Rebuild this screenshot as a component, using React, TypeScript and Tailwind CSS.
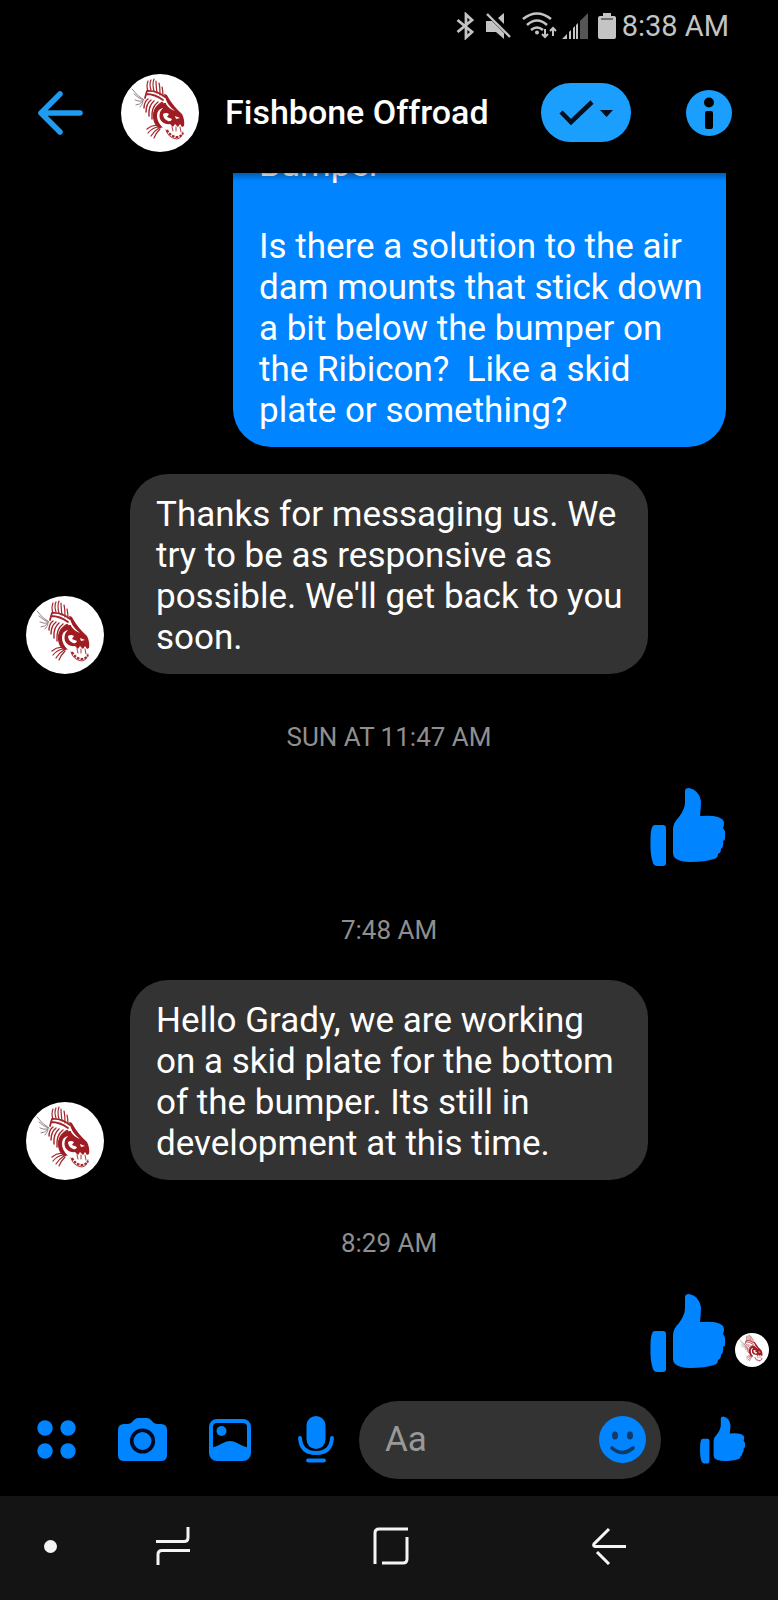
import React from 'react'

type IconProps = { className?: string }

const Avatar = ( { className }: IconProps ) => (
  <svg viewBox="0 0 78 78" className={ className } role="img" aria-label="Fishbone Offroad">
    <circle cx="39" cy="39" r="39" fill="#fff" />
    <g fill="none" stroke="#a3242b" strokeLinecap="round">
      <path strokeWidth="0.9" stroke="#8b7478" d="M11 15q5 7 12 11M13 20q4 4 9 6M14 26q4 2 8 1M15 31q4 0 7-4M19 33q2-2 3-5" />
      <path strokeWidth="1.2" d="M27 17q-2-5 0-10M30 16q-2-6 0-10M33 17q-2-7 0-12M36 19q-1-8-1-12M39 21q0-8-1-12M42 22q0-5-1-9" />
      <path strokeWidth="1.8" d="M24 24q1-4 2-7 9-1 18 6M25 20q9 0 17 6" />
      <path strokeWidth="1.4" d="M27 25q-4 3-4 9M30 26q-5 4-5 12M33 27q-6 5-5 15M37 28q-7 5-6 17" />
      <path strokeWidth="2.6" d="M41 29q-10 6-7 18 1 4 5 6" />
      <path strokeWidth="1.200" d="M38 52q-6-2-12 3M37 53q-6 1-10 6M38 54q-5 3-8 8M39 55q-4 4-6 9" />
      <path strokeWidth="2.2" strokeLinecap="butt" strokeDasharray="2.6 1.2" d="M46 56q3 6 9 7 5 0 7-4" />
      <path strokeWidth="0.9" d="M45 56q2 8 11 9 5-1 6-7M51 53l1 4M55 53l0 4M59 53l1 5" />
    </g>
    <path fill="#9f1c23" d="M43 20q3 0 4 3 5 9 14 17 3 6 2 12l-2 1-2-3-2 3-3-3-2 3-3-3q-7 1-10-5-2-6 3-11-6 1-6 8 0 6 6 12-8-2-10-11 0-11 11-14l3 0z" />
    <path fill="#fff" d="M42 40q3-2 6 0l-2 3 5 2q-1 3-4 2-5-2-5-7zM54 42l5 2-4 1zM44 24q3 8 10 13-6-2-9-7z" />
  </svg>
)

const ThumbIcon = ( { className }: IconProps ) => (
  <svg viewBox="0 0 76 80" className={ className } fill="#0084ff" aria-hidden="true">
    <path d="M6 38h8q3 0 3 3v35q0 3-3 3H8q-3 0-4-3Q1 68 1.500 54q0-9 1-12 1-4 3.500-4z" />
    <path d="M36 4q0-3 4-3 10 2 12 13 0 6-1 15 12-1 18 1 6 2 6 6 0 3-1 5 3 4 3 8 0 3-3 5 1 5-2 8 0 4-3 5 0 4-4 5-9 3-24 3-10 0-15-4-2-2-2-5V42q0-6 6-12 6-8 6-15z" />
  </svg>
)

const BackIcon = () => (
  <svg viewBox="0 0 46 44" className="h-11 w-[46px]" fill="none" stroke="#1f9cf0" strokeWidth="5.500" strokeLinecap="round" strokeLinejoin="round" aria-hidden="true">
    <path d="M23 3L4 22l19 19M4 22h39" />
  </svg>
)

const StatusBar = () => (
  <div className="flex h-[52px] items-center justify-end pr-[49px] text-[#c4c4c4]">
    <svg viewBox="0 0 18 28" className="h-7 w-[18px]" fill="none" stroke="currentColor" strokeWidth="2.8" aria-hidden="true">
      <path d="M1.500 8L16 20l-6 5.500v-23L16 8 1.500 20" />
    </svg>
    <svg viewBox="0 0 26 28" className="ml-3 h-7 w-[26px]" fill="currentColor" aria-hidden="true">
      <path d="M0 9h6l12 12v6l-8-7H0zM18 1v11l-6-6z" />
      <path d="M1 2l23 23" stroke="currentColor" strokeWidth="2.4" />
    </svg>
    <svg viewBox="0 0 36 28" className="ml-2.5 h-7 w-9" fill="none" stroke="currentColor" strokeWidth="2.6" aria-hidden="true">
      <path d="M1 7Q15-4 29 7M5 13Q15 4 25 13M9 18Q15 13 21 18" />
      <circle cx="15" cy="20.500" r="2" fill="currentColor" stroke="none" />
      <path strokeWidth="2" d="M23 17v8M20 22l3 3 3-3M31 24v-8M28 19l3-3 3 3" />
    </svg>
    <svg viewBox="0 0 26 26" className="ml-1 h-[26px] w-[26px]" fill="currentColor" aria-hidden="true">
      <path d="M0 26l5-5v5zM7 19l2-2v9H7zM11 15l2-2v13h-2zM14 12l2-2v16h-2z" />
      <path fill="#555" d="M18 8l8-8v26h-8z" />
    </svg>
    <svg viewBox="0 0 18 26" className="ml-2.5 h-[26px] w-[18px]" fill="currentColor" aria-hidden="true">
      <path d="M5 0h8v3h3q2 0 2 2v19q0 2-2 2H2q-2 0-2-2V5q0-2 2-2h3z" />
      <path d="M3 6h12" stroke="#555" strokeWidth="1.5" />
    </svg>
    <span className="ml-1.5 text-[29px] leading-10">8:38 AM</span>
  </div>
)

const Header = () => (
  <header className="flex h-[121px] items-center pr-[46px] pl-[37px]">
    <button type="button" aria-label="Back"><BackIcon /></button>
    <Avatar className="ml-[38px] size-[78px] shrink-0" />
    <h1 className="ml-[26px] flex-1 text-[34px] leading-[41px] font-medium whitespace-nowrap">Fishbone Offroad</h1>
    <button type="button" aria-label="Mark as done" className="flex h-[59px] w-[90px] items-center justify-center rounded-full bg-[#1a9fff]">
      <svg viewBox="0 0 54 28" className="h-7 w-[54px]" aria-hidden="true">
        <path d="M2 13l10 10L33 3" fill="none" stroke="#05101f" strokeWidth="4.5" />
        <path d="M41 11h13l-6.500 7z" fill="#05101f" />
      </svg>
    </button>
    <button type="button" aria-label="Conversation info" className="ml-[55px]">
      <svg viewBox="0 0 46 46" className="size-[46px]" aria-hidden="true">
        <circle cx="23" cy="23" r="23" fill="#1a9fff" />
        <circle cx="23" cy="12.500" r="5" />
        <rect x="19" y="21" width="8" height="18" rx="2" />
      </svg>
    </button>
  </header>
)

const Received = ( { text }: { text: string } ) => (
  <div className="flex items-end gap-[26px] pr-[130px] pl-[26px]">
    <Avatar className="size-[78px] shrink-0" />
    <p className="flex-1 rounded-[38px] bg-[#333] pt-5 pr-4 pb-4 pl-[26px] text-[35px] leading-[41px] whitespace-pre-line">{ text }</p>
  </div>
)

const Time = ( { children }: { children: string } ) => (
  <p className="pt-[47px] pb-[34px] text-center text-[26px] leading-8 text-[#8f8f8f]">{ children }</p>
)

const Composer = () => (
  <form className="flex h-[117px] items-center pt-1 pr-[33px] pl-[37px]" onSubmit={ ( e ) => e.preventDefault() }>
    <div className="flex flex-1 items-center justify-between">
      <button type="button" aria-label="More">
        <svg viewBox="0 0 39 39" className="size-[39px]" fill="#0084ff" aria-hidden="true">
          <circle cx="8" cy="8" r="7.700" /><circle cx="31" cy="8" r="7.700" />
          <circle cx="8" cy="31" r="7.700" /><circle cx="31" cy="31" r="7.700" />
        </svg>
      </button>
      <button type="button" aria-label="Camera">
        <svg viewBox="0 0 49 43" className="h-[43px] w-[49px]" fill="#0084ff" aria-hidden="true">
          <path d="M13 5l3-3q2-2 4-2h9q2 0 4 2l3 3q2 1 4 1h3q6 0 6 6v25q0 6-6 6H6q-6 0-6-6V12q0-6 6-6h3q2 0 4-1z" />
          <circle cx="24.500" cy="23" r="10.800" stroke="#000720" strokeWidth="3.600" />
        </svg>
      </button>
      <button type="button" aria-label="Photos">
        <svg viewBox="0 0 42 42" className="size-[42px]" fill="#0084ff" aria-hidden="true">
          <rect x="2" y="2" width="38" height="38" rx="6" fill="none" stroke="#0084ff" strokeWidth="4" />
          <circle cx="12.500" cy="12" r="5" />
          <path d="M2 29q7-2 12-5 7-4 14 0 5 3 12 5v5q0 6-6 6H8q-6 0-6-6z" />
        </svg>
      </button>
      <button type="button" aria-label="Voice message">
        <svg viewBox="-5 0 46 47" className="h-[47px] w-[46px]" fill="#0084ff" aria-hidden="true">
          <rect x="8.500" y="0" width="19" height="33" rx="9.500" />
          <path d="M2 22q1 15 16 15t16-15M10 44.500h16" fill="none" stroke="#0084ff" strokeWidth="3.800" strokeLinecap="round" />
        </svg>
      </button>
    </div>
    <div className="ml-5 flex h-[78px] w-[302px] items-center rounded-full bg-[#333] pr-[15px] pl-[26px]">
      <input type="text" aria-label="Message" placeholder="Aa" className="w-0 flex-1 bg-transparent text-[35px] leading-[41px] outline-none placeholder:text-[#999]" />
      <button type="button" aria-label="Emoji">
        <svg viewBox="0 0 47 47" className="size-[47px]" aria-hidden="true">
          <circle cx="23.500" cy="23.500" r="23.500" fill="#0084ff" />
          <ellipse cx="16" cy="19.500" rx="3" ry="4" fill="#123a66" />
          <ellipse cx="31" cy="19.500" rx="3" ry="4" fill="#123a66" />
          <path d="M13 32q10 9 21 0" fill="none" stroke="#123a66" strokeWidth="3.600" strokeLinecap="round" />
        </svg>
      </button>
    </div>
    <button type="submit" aria-label="Send a like" className="ml-[38px]"><ThumbIcon className="h-12 w-[46px]" /></button>
  </form>
)

const NavBar = () => (
  <nav className="flex h-[104px] items-center bg-[#141414] pb-1 pl-11">
    <span className="size-[13px] rounded-full bg-[#f5f5f5]" />
    <button type="button" aria-label="Recent apps" className="ml-[99px]">
      <svg viewBox="0 0 34 40" className="h-10 w-[34px]" fill="none" stroke="#f5f5f5" strokeWidth="3" aria-hidden="true">
        <path d="M0 15.500h28q4 0 4-4V1M34 24.500H6q-4 0-4 4V39" />
      </svg>
    </button>
    <button type="button" aria-label="Home" className="mx-auto">
      <svg viewBox="0 0 36 38" className="h-[38px] w-9" fill="none" stroke="#f5f5f5" strokeWidth="3" aria-hidden="true">
        <path d="M2 37V6q0-4 4-4h29M34 10v22q0 4-4 4H9" />
      </svg>
    </button>
    <button type="button" aria-label="Back" className="mr-[152px]">
      <svg viewBox="0 0 34 38" className="h-[38px] w-[34px]" fill="none" stroke="#f5f5f5" strokeWidth="3" aria-hidden="true">
        <path d="M17 2L2 17q-1 2 1 2.500h31M5 25l12 12" />
      </svg>
    </button>
  </nav>
)

const App = () => {
  return (
    <div className="min-h-screen bg-black font-[Roboto,sans-serif] text-white">
      <StatusBar />
      <Header />

      <main className="pb-1.5">
        <section className="relative flex h-[274px] items-end justify-end overflow-hidden pr-[52px]">
          <p className="w-[493px] rounded-b-[38px] bg-[#0084ff] pt-5 pr-4 pb-4 pl-[26px] text-[35px] leading-[41px] whitespace-pre-wrap">
            { "Bumper\n\nIs there a solution to the air\ndam mounts that stick down\na bit below the bumper on\nthe Ribicon?  Like a skid\nplate or something?" }
          </p>
          <div className="absolute inset-x-0 top-0 h-2 bg-linear-to-b from-black/30 to-transparent" />
        </section>

        <div className="mt-[27px] flex flex-col">
          <Received text={ "Thanks for messaging us. We\ntry to be as responsive as\npossible. We'll get back to you\nsoon." } />
          <Time>SUN AT 11:47 AM</Time>
          <ThumbIcon className="mr-[53px] h-20 w-[76px] self-end" />
          <Time>7:48 AM</Time>
          <Received text={ "Hello Grady, we are working\non a skid plate for the bottom\nof the bumper. Its still in\ndevelopment at this time." } />
          <Time>8:29 AM</Time>
          <div className="flex items-end justify-end gap-2.5 pr-[9px]">
            <ThumbIcon className="h-20 w-[76px]" />
            <Avatar className="mb-1.5 size-[34px]" />
          </div>
        </div>
      </main>

      <Composer />
      <NavBar />
    </div>
  )
}

export default App
